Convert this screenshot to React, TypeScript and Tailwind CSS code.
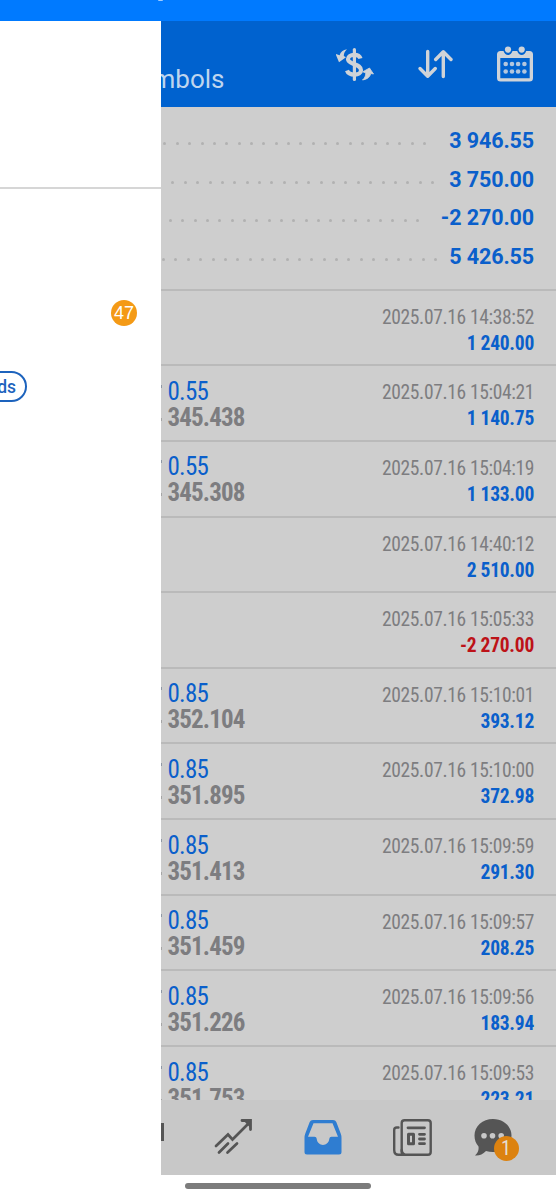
import React from 'react';

interface Deal {
    time: string;
    profit: string;
    volume?: string;
    price?: string;
}

const summary = [
    { value: '3 946.55', dots: 22, pad: 'pr-[130px]' },
    { value: '3 750.00', dots: 22, pad: 'pr-[122px]' },
    { value: '-2 270.00', dots: 21, pad: 'pr-[137px]' },
    { value: '5 426.55', dots: 23, pad: 'pr-[119px]' },
];

const deals: Deal[] = [
    { time: '2025.07.16 14:38:52', profit: '1 240.00' },
    { time: '2025.07.16 15:04:21', profit: '1 140.75', volume: '0.55', price: '345.438' },
    { time: '2025.07.16 15:04:19', profit: '1 133.00', volume: '0.55', price: '345.308' },
    { time: '2025.07.16 14:40:12', profit: '2 510.00' },
    { time: '2025.07.16 15:05:33', profit: '-2 270.00' },
    { time: '2025.07.16 15:10:01', profit: '393.12', volume: '0.85', price: '352.104' },
    { time: '2025.07.16 15:10:00', profit: '372.98', volume: '0.85', price: '351.895' },
    { time: '2025.07.16 15:09:59', profit: '291.30', volume: '0.85', price: '351.413' },
    { time: '2025.07.16 15:09:57', profit: '208.25', volume: '0.85', price: '351.459' },
    { time: '2025.07.16 15:09:56', profit: '183.94', volume: '0.85', price: '351.226' },
    { time: '2025.07.16 15:09:53', profit: '223.21', volume: '0.85', price: '351.753' },
];

const CurrencyIcon = () => (
    <svg className="w-10 h-10" viewBox="0 0 40 40" fill="none" stroke="#cfd3d8">
        <path d="M24.5 14.5C23 9.5 12.3 9.5 12 15C12 18.3 15.5 19 18.5 20.2C22 21.5 25 22.7 25 26.2C25 32 13 32 11 26.5" strokeWidth="4.2" />
        <path d="M18.4 5.5V35.5" strokeWidth="3.2" strokeLinecap="round" />
        <path d="M11 5.2C7 5.7 4.5 8 3.6 11.2L-.4 10L3 18.3L10 13.3L7.8 12C7.8 9.3 9 7 11 5.2Z" fill="#cfd3d8" stroke="none" />
        <path d="M26.5 36C31 35.5 34 33 34.8 29.5L37.5 30L33.5 24L26.8 27.8L29.8 29C29.8 32 28.5 34.2 26.5 36Z" fill="#cfd3d8" strokeWidth=".8" strokeLinejoin="round" />
    </svg>
);

const SortIcon = () => (
    <svg className="w-9 h-8" viewBox="0 0 36 32" fill="none" stroke="#cfd3d8" strokeWidth="3.4" strokeLinecap="round" strokeLinejoin="round">
        <path d="M10.7 3.5V28M3 20.5L10.7 28.3L18.3 20.5" />
        <path d="M26.3 28.5V4M18.7 11.5L26.3 3.7L34 11.5" />
    </svg>
);

const CalendarIcon = () => (
    <svg className="w-9 h-9" viewBox="0 0 36 36">
        <path d="M3.5 5H6.5Q8 9 11 9T15.5 5H20.2Q21.7 9 24.7 9T29.2 5H32.5Q36 5 36 8.5V32Q36 35.5 32.5 35.5H3.5Q0 35.5 0 32V8.5Q0 5 3.5 5ZM3.3 12V32.3H32.7V12Z" fill="#cfd3d8" fillRule="evenodd" />
        <circle cx="11" cy="3.6" r="3.1" fill="#cfd3d8" />
        <circle cx="24.7" cy="3.6" r="3.1" fill="#cfd3d8" />
        {[8.7, 15, 21.1, 27.4].map((x) => (
            <React.Fragment key={x}>
                <circle cx={x} cy="18" r="2.3" fill="#b3c6de" />
                <circle cx={x} cy="25.5" r="2.3" fill="#b3c6de" />
            </React.Fragment>
        ))}
    </svg>
);

const TradeIcon = () => (
    <svg className="w-[38px] h-9" viewBox="0 0 38 36" fill="none" stroke="#555" strokeWidth="2.7" strokeLinecap="round">
        <path d="M2 27L14 15.5L18.5 20.5L34.5 4.5" strokeLinejoin="miter" />
        <path d="M5 33.5L14 24.5M13.5 33.5L23 24.5" />
        <path d="M28 1.5H36.5V10.5" strokeWidth="2.8" />
        <path d="M29 1H37V9.5Z" fill="#555" stroke="none" />
    </svg>
);

const HistoryIcon = () => (
    <svg className="w-[38px] h-[35px]" viewBox="0 0 38 35">
        <path d="M9 0H29Q31.5 0 32.3 2L36.7 13.5Q37.5 15.5 37.5 18V32Q37.5 34.5 35 34.5H3Q.5 34.5 .5 32V18Q.5 15.5 1.3 13.5L5.7 2Q6.5 0 9 0ZM9.5 3.2L4 16.8H10.5Q12.5 16.8 12.7 18.8C13.5 27 24.5 27 25.3 18.8Q25.5 16.8 27.5 16.8H34L28.5 3.2Z" fill="#2f7dd1" fillRule="evenodd" />
    </svg>
);

const NewsIcon = () => (
    <svg className="w-[39px] h-[37px]" viewBox="0 0 39 37" fill="none" stroke="#555" strokeWidth="2.4" strokeLinecap="round">
        <rect x="8.7" y="1.2" width="29" height="34.6" rx="2.8" />
        <path d="M5.5 8.5H3.8Q1.2 8.5 1.2 11V31Q1.2 35.8 5.5 35.8H12Q8.7 35 8.7 31" />
        <path d="M15 8.8H31.5M26.5 15.3H31.5M26.5 20H31.5M26.5 24.7H31.5" strokeWidth="2.8" />
        <rect x="15.5" y="15.3" width="5" height="9.4" strokeWidth="3" strokeLinejoin="round" />
    </svg>
);

const ChatIcon = () => (
    <svg className="w-[38px] h-[37px]" viewBox="0 0 38 37">
        <path d="M19 0C29.5 0 37.5 7.3 37.5 16.5S29.5 33 19 33C16.5 33 14.2 32.7 12 32C8.5 35.5 5 37 1 36.5C4 34 5 30.5 4.5 27.5C1.8 24.5 .5 20.8 .5 16.5C.5 7.3 8.5 0 19 0Z" fill="#555" />
        <circle cx="10" cy="16.8" r="2.8" fill="#c8c8c8" />
        <circle cx="18.5" cy="16.8" r="2.8" fill="#c8c8c8" />
        <circle cx="27.2" cy="16.8" r="2.8" fill="#c8c8c8" />
    </svg>
);

const DealRow: React.FC<{ deal: Deal }> = ({ deal }) => (
    <div className="flex h-[75.65px] shrink-0 justify-between border-t-2 border-[#bababa] pr-[22px] font-['Roboto_Condensed',Roboto,sans-serif] whitespace-nowrap">
        <div className="flex pt-[12.5px]">
            {deal.volume && (
                <>
                    <div className="flex w-[6.5px] flex-col gap-[30px] pt-[6px]">
                        <span className="h-[3px] w-px bg-[#8f98a5]" />
                        <span className="h-[3px] w-px bg-[#a5a5a5]" />
                    </div>
                    <div className="flex flex-col">
                        <span className="text-[25px] leading-[26px] tracking-[-0.75px] text-[#0a5fcb]">{deal.volume}</span>
                        <span className="text-[25px] leading-[26px] font-bold tracking-[-0.85px] text-[#7d7d80]">{deal.price}</span>
                    </div>
                </>
            )}
        </div>
        <div className="flex flex-col items-end pt-[13px]">
            <span className="text-[19.5px] leading-[27px] tracking-[-0.35px] text-[#7d7d80]">{deal.time}</span>
            <span className={`text-[19.5px] leading-[26.5px] font-bold tracking-[-0.25px] ${deal.profit.startsWith('-') ? 'text-[#bd1218]' : 'text-[#0a5fcb]'}`}>{deal.profit}</span>
        </div>
    </div>
);

const Drawer = () => (
    <aside className="flex w-[161px] shrink-0 flex-col items-start overflow-hidden bg-white">
        <div className="h-[168px] w-full shrink-0 border-b-2 border-[#d6d6d6]" />
        <div className="mt-[111px] flex w-full justify-end pr-6">
            <span className="flex h-[26px] w-[26px] items-center justify-center rounded-full bg-[#f49a16] font-['Liberation_Sans',sans-serif] text-[18px] text-white">47</span>
        </div>
        <div className="mt-[45px] -ml-5 flex h-[31px] w-[47px] items-center justify-end rounded-full border-2 border-[#1d63bd] pt-px pr-[9px] text-[17.5px] font-medium text-[#1d63bd]">
            ds
        </div>
    </aside>
);

export default function App() {
    return (
        <div className="flex h-[1200px] w-[556px] flex-col overflow-hidden bg-white font-[Roboto,sans-serif]">
            <div className="flex h-[21px] shrink-0 bg-[#007aff] pl-[158px]">
                <span className="h-px w-[5px] rounded-b-full bg-[#9fcbff]" />
            </div>
            <div className="flex min-h-0 flex-1">
                <Drawer />
                <div className="flex min-w-0 flex-1 flex-col">
                    <header className="flex h-[86px] shrink-0 items-center justify-between overflow-hidden bg-[#0062cf] pr-[23px]">
                        <span className="-ml-[8.5px] pt-[29px] text-[26px] leading-8 text-[#bed5ee]">mbols</span>
                        <div className="flex items-center">
                            <CurrencyIcon />
                            <div className="ml-[41px]"><SortIcon /></div>
                            <div className="ml-[44px]"><CalendarIcon /></div>
                        </div>
                    </header>
                    <main className="flex min-h-0 flex-1 flex-col overflow-hidden bg-[#cecece]">
                        <div className="flex h-[181.6px] shrink-0 flex-col pt-[14.5px]">
                            {summary.map((row) => (
                                <div key={row.value} className="grid h-[38.6px] items-center">
                                    <div className={`col-start-1 row-start-1 flex justify-end gap-[9.37px] overflow-hidden pt-[6px] ${row.pad}`}>
                                        {Array.from({ length: row.dots }, (_, i) => (
                                            <span key={i} className="h-[3px] w-[3px] shrink-0 rounded-full bg-[#b1b1b1]" />
                                        ))}
                                    </div>
                                    <span className="col-start-1 row-start-1 pt-px pr-[22px] text-right text-[21.5px] font-bold tracking-[-0.1px] text-[#0a5fcb]">{row.value}</span>
                                </div>
                            ))}
                        </div>
                        {deals.map((deal) => (
                            <DealRow key={deal.time} deal={deal} />
                        ))}
                    </main>
                    <nav className="flex h-[75px] shrink-0 items-center bg-[#c8c8c8]">
                        <span className="-mt-3 h-[18px] w-[3px] bg-[#555]" />
                        <div className="-mt-px ml-[50px]"><TradeIcon /></div>
                        <div className="-mt-px ml-[51.5px]"><HistoryIcon /></div>
                        <div className="-mt-px ml-[51px]"><NewsIcon /></div>
                        <div className="relative -mt-px ml-[42.5px]">
                            <ChatIcon />
                            <span className="absolute top-[17px] left-[19.5px] flex h-[25px] w-[25px] items-center justify-center rounded-full bg-[#dc8210] font-['Roboto_Condensed',Roboto,sans-serif] text-[20px] text-[#e5dfd4]">1</span>
                        </div>
                    </nav>
                    <div className="h-[25px] shrink-0 bg-white pt-2 pl-6">
                        <div className="h-[6px] w-[186px] rounded-full bg-[#7c7c7c]" />
                    </div>
                </div>
            </div>
        </div>
    );
}
